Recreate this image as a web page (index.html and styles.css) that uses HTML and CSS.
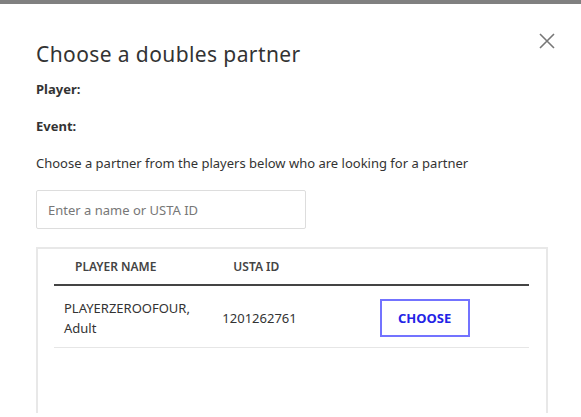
FILE: index.html
```html
<!DOCTYPE html>
<html lang="en">
<head>
    <meta charset="UTF-8">
    <meta name="viewport" content="width=device-width, initial-scale=1.0">
    <title>Choose a doubles partner</title>
    <link rel="stylesheet" href="styles.css">
</head>
<body>
    <div class="modal">
        <button class="close" type="button" aria-label="Close">
            <svg width="16" height="16" viewBox="0 0 16 16">
                <path d="M1 1 L15 15 M15 1 L1 15" stroke="#777" stroke-width="1.6" fill="none"/>
            </svg>
        </button>

        <h1>Choose a doubles partner</h1>

        <p class="meta">Player:</p>
        <p class="meta">Event:</p>

        <p class="intro">Choose a partner from the players below who are looking for a partner</p>

        <input class="search" type="text" placeholder="Enter a name or USTA ID">

        <div class="results">
            <table>
                <thead>
                    <tr>
                        <th>Player name</th>
                        <th>USTA ID</th>
                        <th></th>
                    </tr>
                </thead>
                <tbody>
                    <tr>
                        <td>PLAYERZEROOFOUR,<br>Adult</td>
                        <td>1201262761</td>
                        <td><button class="choose" type="button">CHOOSE</button></td>
                    </tr>
                </tbody>
            </table>
        </div>
    </div>
</body>
</html>
```

FILE: styles.css
```css
/* Base */
body {
    margin: 0;
    background-color: #fff;
    font-family: "Noto Sans", Arial, sans-serif;
    color: #333;
}

/* Modal */
.modal {
    position: relative;
    border-top: 4px solid #808080;
    padding: 36px 33px 0 36px;
    height: 413px;
    box-sizing: border-box;
    overflow: hidden;
}

.close {
    position: absolute;
    top: 29px;
    right: 26px;
    padding: 0;
    border: none;
    background: none;
    cursor: pointer;
}

h1 {
    margin: 0 0 13px;
    font-size: 21px;
    font-weight: 400;
    letter-spacing: 0.4px;
    color: #333;
}

.meta {
    margin: 0 0 20px;
    font-size: 13px;
    font-weight: 700;
    line-height: 17px;
}

.intro {
    margin: 0 0 18px;
    font-size: 13px;
    line-height: 17px;
}

/* Search */
.search {
    display: block;
    width: 270px;
    height: 39px;
    box-sizing: border-box;
    padding: 0 11px;
    border: 1px solid #ddd;
    border-radius: 2px;
    font-family: inherit;
    font-size: 13px;
    color: #333;
    margin-bottom: 18px;
}

.search::placeholder {
    color: #777;
}

/* Results table */
.results {
    border: 2px solid #e8e8e8;
    padding: 0 17px 0 16px;
    height: 200px;
}

table {
    width: 100%;
    border-collapse: collapse;
    table-layout: fixed;
}

th {
    text-align: left;
    font-size: 12px;
    font-weight: 600;
    text-transform: uppercase;
    color: #444;
    padding: 9px 10px 9px 21px;
    border-bottom: 2px solid #444;
}

td {
    font-size: 13px;
    line-height: 20px;
    padding: 12px 10px 9px 10px;
    border-bottom: 1px solid #e6e6e6;
}

td:nth-child(3) {
    padding-left: 9px;
}

.choose {
    width: 90px;
    height: 38px;
    border: 2px solid #7373ff;
    background-color: #fff;
    color: #2323e6;
    font-family: inherit;
    font-size: 13px;
    font-weight: 700;
    cursor: pointer;
}
```
